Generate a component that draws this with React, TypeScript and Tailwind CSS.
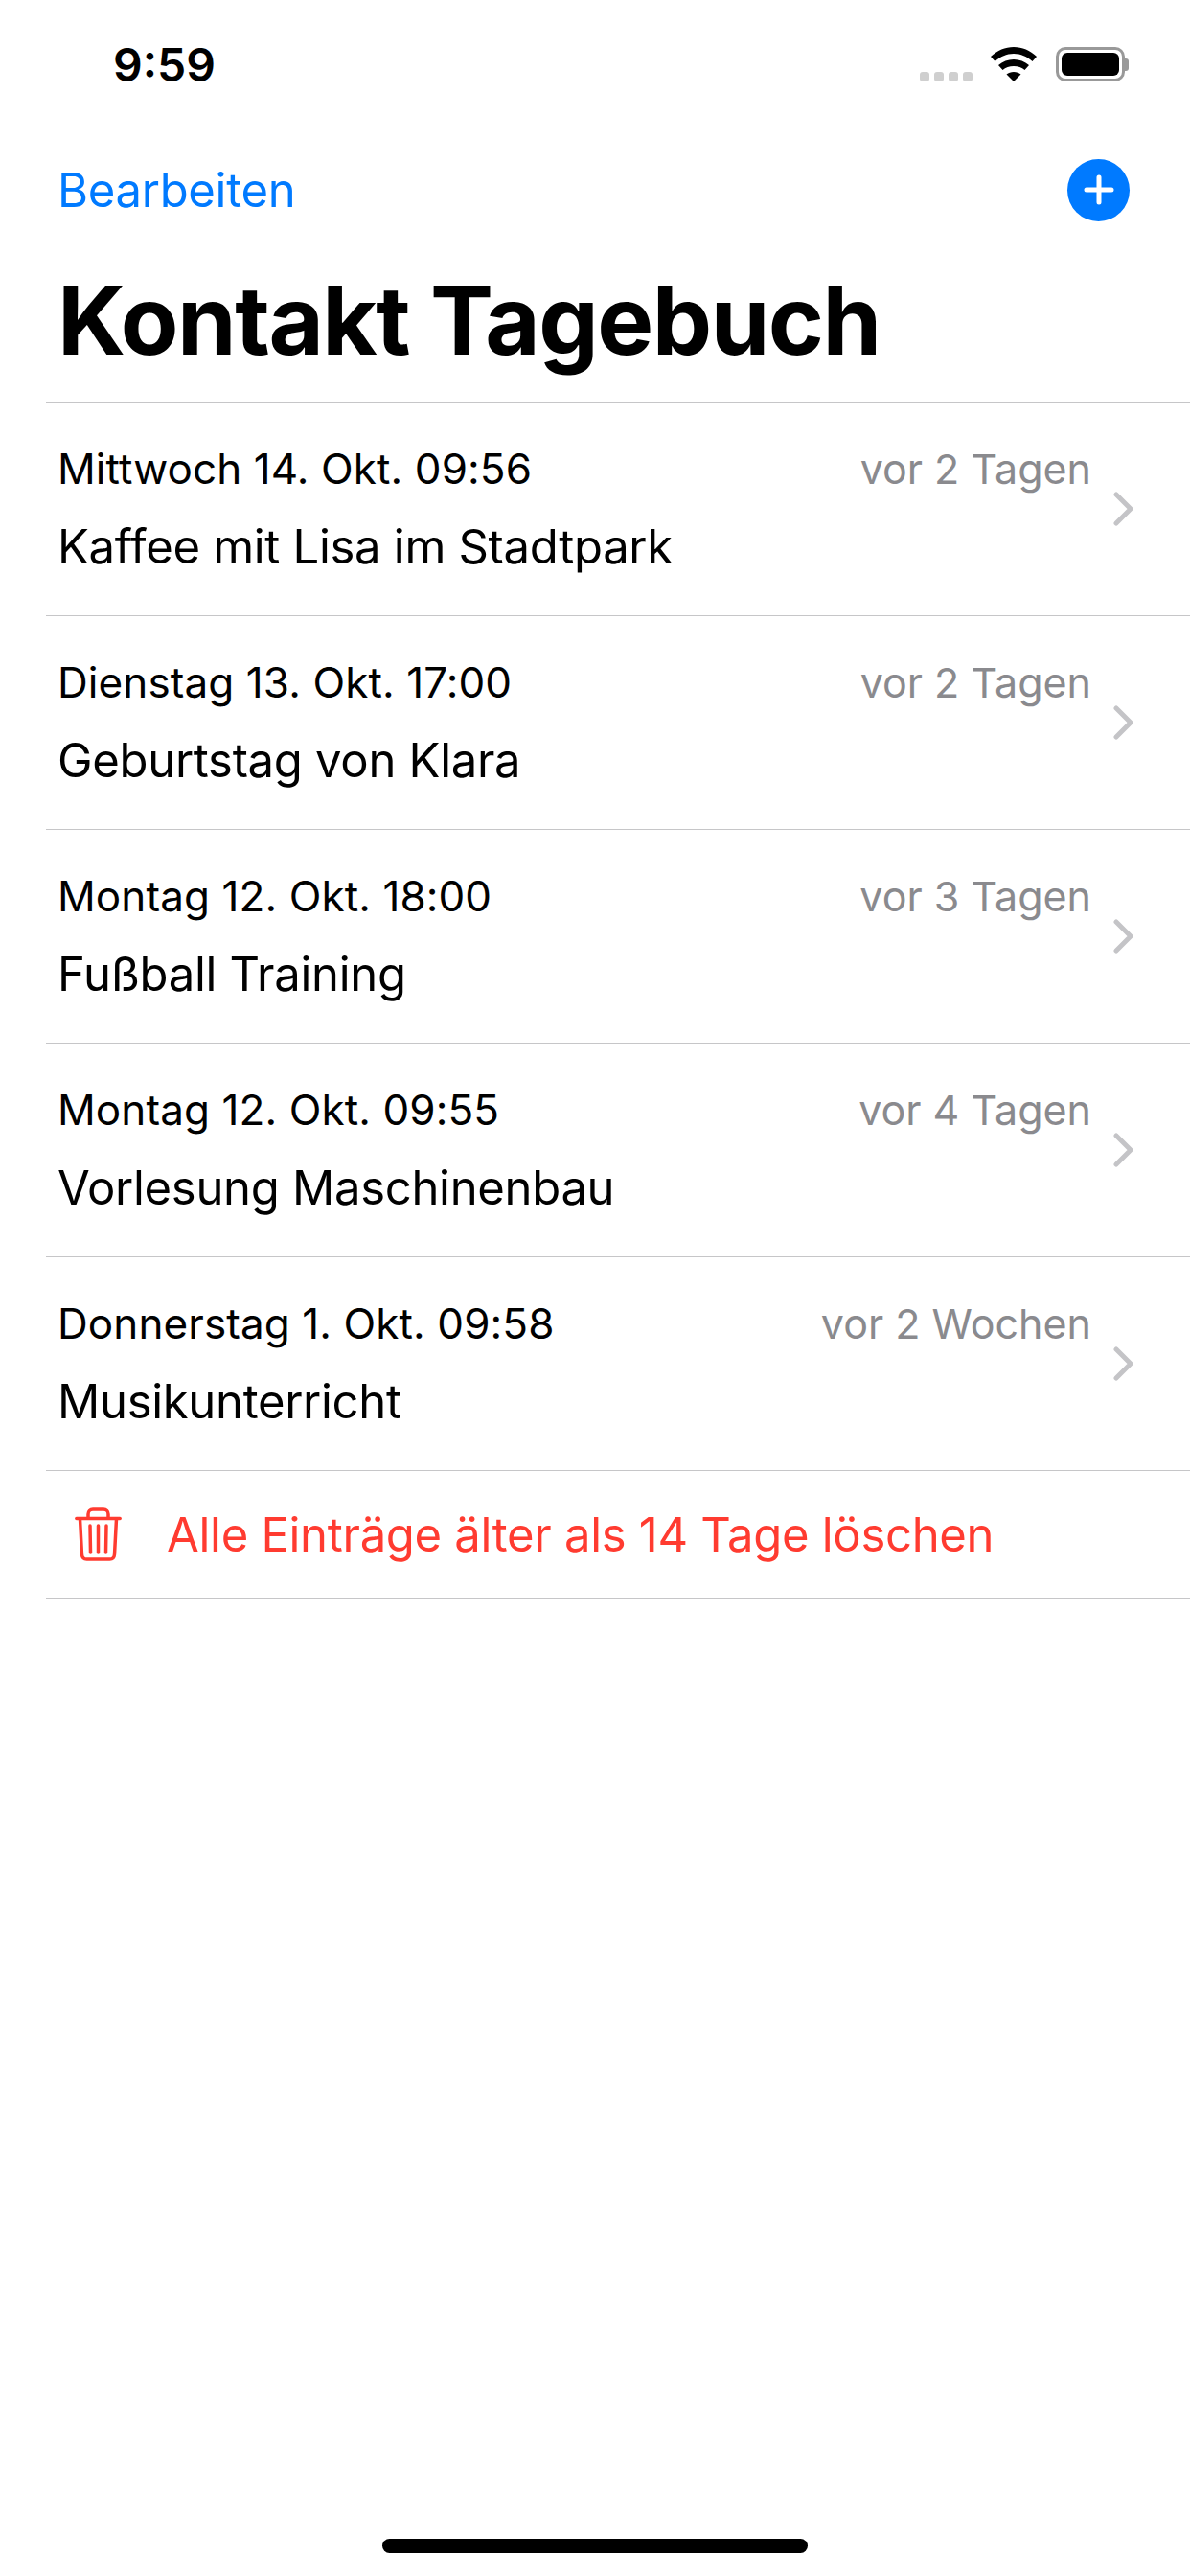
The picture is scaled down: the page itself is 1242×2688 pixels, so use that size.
const entries = [
  { date: 'Mittwoch 14. Okt. 09:56', ago: 'vor 2 Tagen', title: 'Kaffee mit Lisa im Stadtpark' },
  { date: 'Dienstag 13. Okt. 17:00', ago: 'vor 2 Tagen', title: 'Geburtstag von Klara' },
  { date: 'Montag 12. Okt. 18:00', ago: 'vor 3 Tagen', title: 'Fußball Training' },
  { date: 'Montag 12. Okt. 09:55', ago: 'vor 4 Tagen', title: 'Vorlesung Maschinenbau' },
  { date: 'Donnerstag 1. Okt. 09:58', ago: 'vor 2 Wochen', title: 'Musikunterricht' },
];

function Wifi() {
  return (
    <svg width="48" height="36" viewBox="0 0 48 36" fill="#000">
      <path d="M24 0C15 0 7 3.500 0 10l4.500 5C10 10 16.500 7 24 7s14 3 19.500 8L48 10C41 3.500 33 0 24 0z" />
      <path d="M24 13c-6 0-11.500 2.200-16 6l4.500 5c3-2.600 7-4 11.500-4s8.500 1.400 11.500 4l4.500-5c-4.500-3.800-10-6-16-6z" />
      <path d="M24 26c-3 0-5.500 1-7.500 2.500L24 36l7.500-7.500C29.500 27 27 26 24 26z" />
    </svg>
  );
}

function Trash() {
  return (
    <svg width="49" height="56" viewBox="0 0 49 56" fill="none" stroke="#ff3b30" strokeWidth="3.500" strokeLinecap="round" strokeLinejoin="round" className="shrink-0">
      <path d="M1.800 11.500h45.400" />
      <path d="M14 11V7c0-3 2-5 5-5h11c3 0 5 2 5 5v4" />
      <path d="M5.500 12l2 37c.2 3 2 5 5 5h24c3 0 4.800-2 5-5l2-37" />
      <path d="M16 19l.5 28M24.500 19v28M33 19l-.5 28" />
    </svg>
  );
}

export default function App() {
  return (
    <div className="h-[2688px] w-[1242px] bg-white flex flex-col overflow-hidden font-['Inter',sans-serif] text-black">
      {/* status bar */}
      <div className="h-[164px] flex items-start justify-between pl-[118px] pr-[64px] shrink-0">
        <span className="text-[48px] leading-[58px] mt-[39px] font-semibold">9:59</span>
        <div className="flex items-start mt-[49px]">
          <div className="flex gap-[5px] mt-[26px] mr-[19px]">
            <div className="w-[10px] h-[10px] rounded-[3px] bg-[#cfcfcf]" />
            <div className="w-[10px] h-[10px] rounded-[3px] bg-[#cfcfcf]" />
            <div className="w-[10px] h-[10px] rounded-[3px] bg-[#cfcfcf]" />
            <div className="w-[10px] h-[10px] rounded-[3px] bg-[#cfcfcf]" />
          </div>
          <Wifi />
          <div className="flex items-center ml-[20px]">
            <div className="w-[72px] h-[36px] rounded-[10px] border-[3px] border-[#999999] p-[3px]">
              <div className="w-full h-full rounded-[6px] bg-black" />
            </div>
            <div className="w-[4px] h-[13px] rounded-r-[3px] bg-[#999999]" />
          </div>
        </div>
      </div>

      {/* nav */}
      <div className="h-[70px] flex items-center justify-between pl-[60px] pr-[63px] shrink-0 -mt-[1px]">
        <span className="text-[49px] leading-[60px] tracking-[-0.3px] mt-[2px] text-[#007aff]">Bearbeiten</span>
        <div className="w-[65px] h-[65px] rounded-full bg-[#007aff] flex items-center justify-center">
          <svg width="32" height="32" viewBox="0 0 32 32" stroke="#fff" strokeWidth="5" strokeLinecap="round">
            <path d="M16 3v26M3 16h26" />
          </svg>
        </div>
      </div>

      {/* title */}
      <div className="h-[187px] -mt-[1px] pl-[60px] shrink-0">
        <h1 className="text-[99px] leading-[124px] font-bold tracking-[-1.5px] mt-[40px]">Kontakt Tagebuch</h1>
      </div>

      {/* list */}
      <div className="ml-[48px] border-t border-[#c6c6c8]">
        {entries.map((e) => (
          <div key={e.date} className="h-[223px] border-b border-[#c6c6c8] flex items-center pl-[12px] pr-[59px]">
            <div className="flex-1 flex flex-col">
              <div className="flex justify-between items-center h-[56px]">
                <span className="text-[44px] leading-[54px] tracking-[0.1px]">{e.date}</span>
                <span className="text-[43px] leading-[54px] text-[#8a8a8e] mr-[23px]">{e.ago}</span>
              </div>
              <span className="text-[49px] leading-[60px] tracking-[-0.3px] mt-[24px]">{e.title}</span>
            </div>
            <svg width="21" height="36" viewBox="0 0 21 36" fill="none" stroke="#c4c4c7" strokeWidth="5" strokeLinecap="round" strokeLinejoin="round" className="shrink-0">
              <path d="M3 3l15 15L3 33" />
            </svg>
          </div>
        ))}
        <div className="h-[133px] border-b border-[#c6c6c8] flex items-center pl-[30px] gap-[47px]">
          <Trash />
          <span className="text-[49px] leading-[60px] tracking-[-0.3px] mt-[2px] text-[#ff3b30]">Alle Einträge älter als 14 Tage löschen</span>
        </div>
      </div>

      {/* home indicator */}
      <div className="mt-auto mb-[24px] mx-auto w-[444px] h-[15px] rounded-full bg-black" />
    </div>
  );
}
